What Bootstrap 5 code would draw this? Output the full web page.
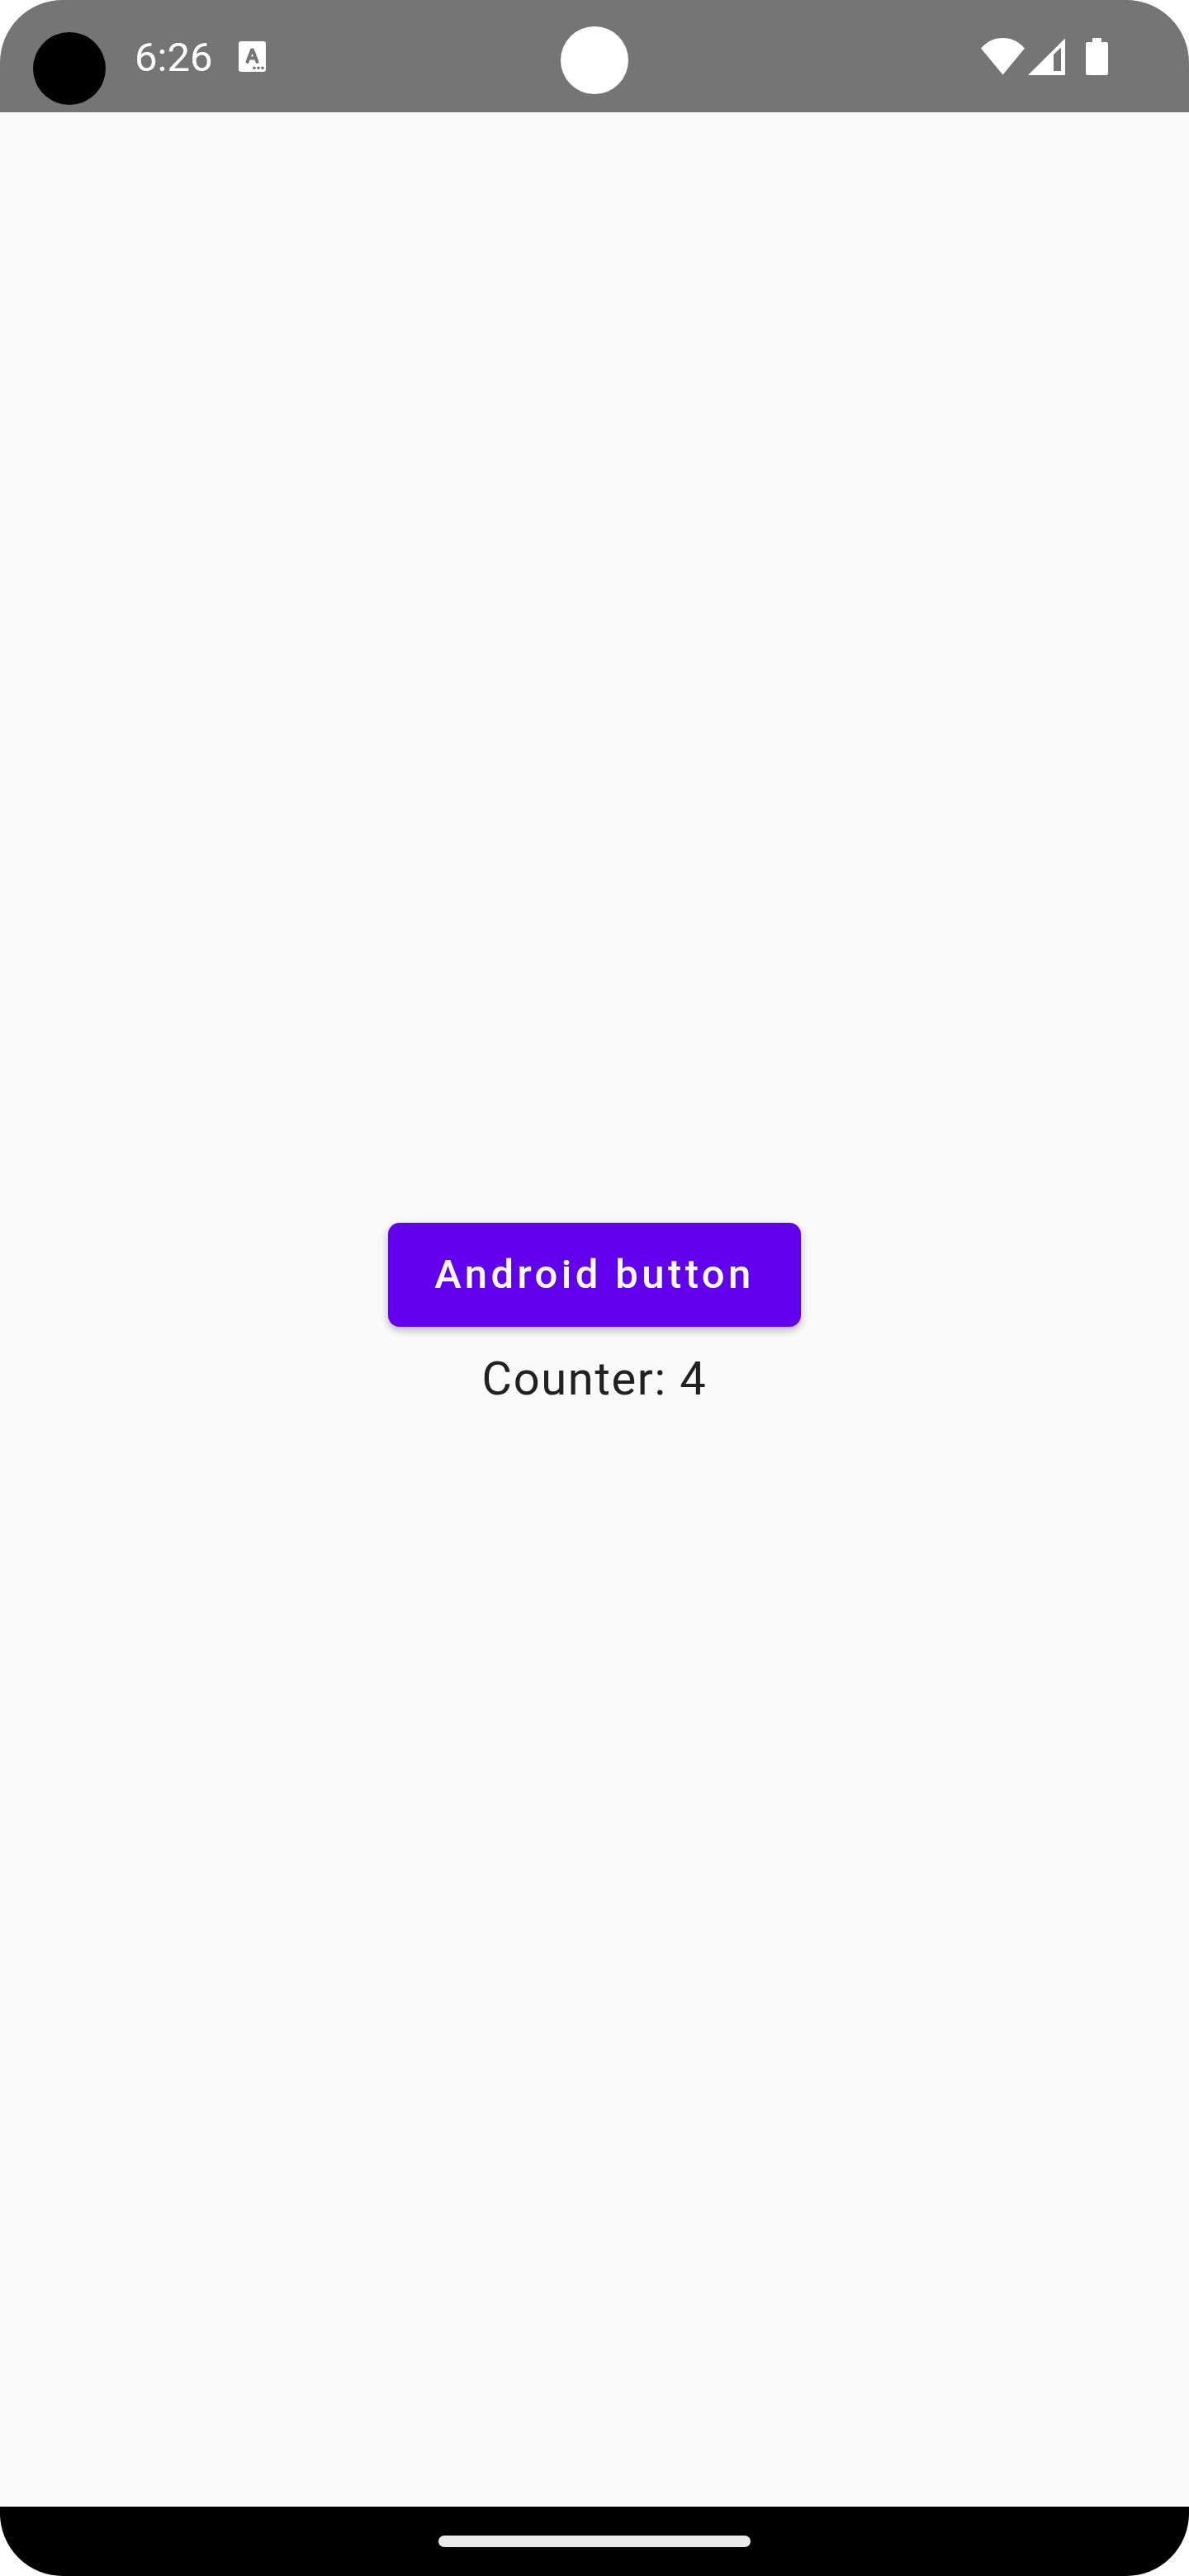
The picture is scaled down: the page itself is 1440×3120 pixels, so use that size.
<!DOCTYPE html>
<html lang="en">
<head>
<meta charset="utf-8">
<meta name="viewport" content="width=device-width, initial-scale=1">
<title>Android counter</title>
<link href="https://cdn.jsdelivr.net/npm/bootstrap@5.3.0/dist/css/bootstrap.min.css" rel="stylesheet">
<style>
body { background: #fff; font-family: Roboto, "Liberation Sans", sans-serif; }
.phone-screen { background: #fafafa; border-radius: 76px; }
.status-bar { height: 136px; padding: 0 98px 0 163px; background: #757575; color: #fff; }
.status-clock { font-size: 49px; line-height: 58px; }
.status-left { gap: 32px; }
.cutout-left { width: 88px; height: 88px; left: 40px; top: 39px; background: #000; }
.cutout-center { width: 82px; height: 82px; top: 32px; background: #fff; }
.signal-gap { margin-left: 4px; }
.battery-gap { margin-left: 25px; }
.btn-android {
  --bs-btn-color: #fff; --bs-btn-bg: #6200ee; --bs-btn-border-color: #6200ee;
  --bs-btn-hover-color: #fff; --bs-btn-hover-bg: #5600d6; --bs-btn-hover-border-color: #5600d6;
  --bs-btn-active-color: #fff; --bs-btn-active-bg: #4b00bd;
  --bs-btn-border-width: 0; --bs-btn-border-radius: 14px;
  --bs-btn-padding-x: 56px; --bs-btn-padding-y: 34px;
  --bs-btn-font-size: 49px; --bs-btn-line-height: 58px; --bs-btn-font-weight: 500;
  margin: 21px 0; letter-spacing: .09em;
  box-shadow: 0 5px 8px rgba(0, 0, 0, .2), 0 2px 14px rgba(0, 0, 0, .08);
}
.counter-text { font-size: 56px; line-height: 84px; letter-spacing: .03em; color: #212121; }
.nav-area { height: 84px; background: #000; }
.home-pill { width: 378px; height: 14px; background: #ebebeb; }
</style>
<script defer src="https://cdn.jsdelivr.net/npm/bootstrap@5.3.0/dist/js/bootstrap.bundle.min.js"></script>
</head>
<body>
<div class="phone-screen min-vh-100 d-flex flex-column overflow-hidden">
  <header class="status-bar position-relative d-flex align-items-center justify-content-between">
    <span class="cutout-left position-absolute rounded-circle"></span>
    <span class="cutout-center position-absolute start-50 translate-middle-x rounded-circle"></span>
    <div class="status-left d-flex align-items-center">
      <time class="status-clock mt-1">6:26</time>
      <svg width="33" height="37" viewBox="0 0 33 37" aria-hidden="true">
        <rect width="33" height="37" rx="3" fill="#fff"/>
        <path d="M10.500 25 L16 10.500 H17 L22.500 25 M12.500 20.500 H20.500" fill="none" stroke="#757575" stroke-width="4" stroke-linecap="round" stroke-linejoin="round"/>
        <g fill="#757575"><circle cx="19" cy="32.300" r="1.800"/><circle cx="24" cy="32.300" r="1.800"/><circle cx="29" cy="32.300" r="1.800"/></g>
      </svg>
    </div>
    <div class="d-flex align-items-center">
      <svg width="53" height="45" viewBox="0 0 53 45" fill="#fff" aria-hidden="true"><path d="M0 12.500 C7 4.500 16 0 26.500 0 S46 4.500 53 12.500 L26.500 44.500Z"/></svg>
      <svg class="signal-gap" width="45" height="45" viewBox="0 0 45 45" fill="#fff" fill-rule="evenodd" aria-hidden="true"><path d="M45 .5 V45 H0Z M40 11.500 L31 20 V40 H40Z"/></svg>
      <svg class="battery-gap" width="27" height="45" viewBox="0 0 27 45" fill="#fff" aria-hidden="true"><path d="M8 0 H19 V5 H25.500 L27 6.500 V43.500 L25.500 45 H1.500 L0 43.500 V6.500 L1.500 5 H8Z"/></svg>
    </div>
  </header>
  <main class="flex-grow-1 d-flex flex-column align-items-center justify-content-center">
    <button type="button" class="btn btn-android">Android button</button>
    <p class="counter-text mb-0">Counter: 4</p>
  </main>
  <footer class="nav-area d-flex align-items-center justify-content-center">
    <span class="home-pill rounded-pill"></span>
  </footer>
</div>
</body>
</html>
